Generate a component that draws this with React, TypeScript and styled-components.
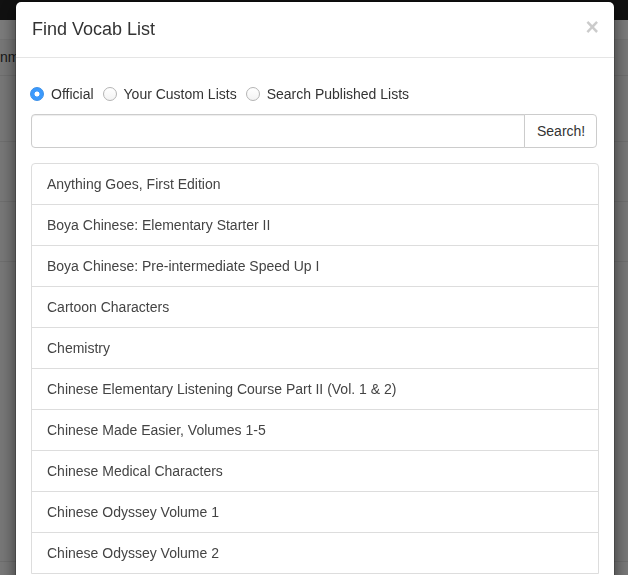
import React from "react";
import styled, { createGlobalStyle } from "styled-components";

const Global = createGlobalStyle`
  html, body {
    margin: 0;
    padding: 0;
    height: 100%;
    overflow: hidden;
    font-family: "Liberation Sans", Arial, sans-serif;
  }
  body { background: #fff; }
  * { box-sizing: border-box; }
`;

const Page = styled.div`
  display: flex;
  flex-direction: column;
  height: 575px;
  background: #f0f0f0;
`;

const NavBar = styled.div`
  height: 20px;
  background: #222;
`;

const SubBar = styled.div`
  height: 20px;
  background: #f6f6f6;
  border-bottom: 1px solid #e6e6e6;
`;

const PageRow = styled.div<{ $h: number }>`
  height: ${(p) => p.$h}px;
  border-bottom: 1px solid #dcdcdc;
  display: flex;
  align-items: center;
  font-size: 14px;
  color: #333;
  background: #eeeeee;
`;

const RowText = styled.span`
  margin-top: -2px;
`;

const Backdrop = styled.div`
  position: fixed;
  inset: 0;
  background: rgba(0, 0, 0, 0.5);
  overflow: hidden;
`;

const Dialog = styled.div`
  width: 600px;
  margin: 1px 0 0 15px;
  background: #fff;
  border: 1px solid rgba(0, 0, 0, 0.2);
  border-radius: 6px;
  box-shadow: 0 5px 15px rgba(0, 0, 0, 0.5);
  background-clip: padding-box;
`;

const Header = styled.div`
  display: flex;
  align-items: flex-start;
  justify-content: space-between;
  padding: 15px 15px 15px 16px;
  border-bottom: 1px solid #e5e5e5;
`;

const Title = styled.h4`
  margin: 0;
  font-size: 18px;
  font-weight: 500;
  line-height: 25px;
  color: #333;
`;

const Close = styled.button`
  border: 0;
  background: transparent;
  padding: 0;
  margin: -1px 0 0 0;
  font-family: "Liberation Sans", Arial, sans-serif;
  font-size: 23px;
  font-weight: bold;
  line-height: 1;
  color: #000;
  opacity: 0.2;
  cursor: pointer;
`;

const Body = styled.div`
  padding: 15px;
`;

const RadioRow = styled.div`
  display: flex;
  align-items: center;
  gap: 9px;
  height: 20px;
  margin: 11px 0 10px -1px;
  font-size: 14px;
  color: #333;
`;

const RadioLabel = styled.label`
  display: flex;
  align-items: center;
  gap: 7px;
  cursor: pointer;
`;

const Radio = styled.input`
  appearance: none;
  -webkit-appearance: none;
  margin: 0;
  width: 14px;
  height: 14px;
  border-radius: 50%;
  border: 1px solid #b4b4b4;
  background: linear-gradient(#ffffff, #f3f3f3);
  flex: none;
  &:checked {
    border-color: #3a8fe8;
    background: radial-gradient(circle, #ffffff 0 2.2px, #3b99fc 2.8px);
  }
`;

const InputGroup = styled.div`
  display: flex;
  width: 566px;
  height: 34px;
`;

const SearchInput = styled.input`
  flex: 1;
  min-width: 0;
  height: 34px;
  padding: 6px 12px;
  font-size: 14px;
  border: 1px solid #ccc;
  border-radius: 4px 0 0 4px;
  box-shadow: inset 0 1px 1px rgba(0, 0, 0, 0.075);
  outline: none;
`;

const SearchButton = styled.button`
  flex: none;
  width: 73px;
  height: 34px;
  margin-left: -1px;
  padding: 6px 12px;
  font-family: "Liberation Sans", Arial, sans-serif;
  font-size: 14px;
  color: #333;
  background: #fff;
  border: 1px solid #ccc;
  border-radius: 0 4px 4px 0;
`;

const List = styled.div`
  margin-top: 15px;
  border: 1px solid #ddd;
  border-radius: 4px 4px 0 0;
  overflow: hidden;
  width: 568px;
`;

const Item = styled.a`
  display: block;
  padding: 10px 15px;
  font-size: 14px;
  line-height: 20px;
  color: #444;
  text-decoration: none;
  & + & {
    border-top: 1px solid #ddd;
  }
`;

const items = [
  "Anything Goes, First Edition",
  "Boya Chinese: Elementary Starter II",
  "Boya Chinese: Pre-intermediate Speed Up I",
  "Cartoon Characters",
  "Chemistry",
  "Chinese Elementary Listening Course Part II (Vol. 1 & 2)",
  "Chinese Made Easier, Volumes 1-5",
  "Chinese Medical Characters",
  "Chinese Odyssey Volume 1",
  "Chinese Odyssey Volume 2",
];

export default function App() {
  return (
    <>
      <Global />
      <Page>
        <NavBar />
        <SubBar />
        <PageRow $h={36}>
          <RowText>nm</RowText>
        </PageRow>
        <PageRow $h={66} />
        <PageRow $h={60} />
        <PageRow $h={60} />
        <PageRow $h={300} />
      </Page>
      <Backdrop>
        <Dialog>
          <Header>
            <Title>Find Vocab List</Title>
            <Close aria-label="Close">×</Close>
          </Header>
          <Body>
            <RadioRow>
              <RadioLabel>
                <Radio type="radio" name="src" defaultChecked />
                Official
              </RadioLabel>
              <RadioLabel>
                <Radio type="radio" name="src" />
                Your Custom Lists
              </RadioLabel>
              <RadioLabel>
                <Radio type="radio" name="src" />
                Search Published Lists
              </RadioLabel>
            </RadioRow>
            <InputGroup>
              <SearchInput type="text" />
              <SearchButton>Search!</SearchButton>
            </InputGroup>
            <List>
              {items.map((t) => (
                <Item key={t} href="#">
                  {t}
                </Item>
              ))}
            </List>
          </Body>
        </Dialog>
      </Backdrop>
    </>
  );
}
